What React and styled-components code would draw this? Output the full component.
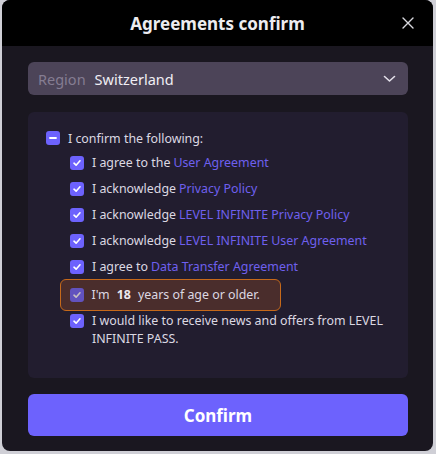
import React from "react";
import styled, { createGlobalStyle } from "styled-components";

const GlobalStyle = createGlobalStyle`
  html, body {
    margin: 0;
    padding: 0;
    background: #cfcfd6;
  }
  body {
    font-family: "Noto Sans", "Open Sans", Arial, sans-serif;
  }
`;

const colors = {
  body: "#1a1720",
  panel: "#221d2f",
  select: "#4c4458",
  text: "#dcd8e2",
  muted: "#857d92",
  link: "#6f60ee",
  accent: "#6d62fd",
  warn: "#c6691a",
  warnBg: "#4a2d2c",
};

const Dialog = styled.div`
  width: 431px;
  height: 451px;
  margin-left: 2px;
  border-radius: 8px;
  overflow: hidden;
  background: ${colors.body};
  display: flex;
  flex-direction: column;
`;

const Header = styled.div`
  height: 46px;
  background: #000;
  display: grid;
  grid-template-columns: 40px 1fr 40px;
  align-items: center;
  padding: 0 12px 0 12px;
`;

const Title = styled.h1`
  grid-column: 2;
  margin: 0;
  text-align: center;
  color: #ececf0;
  font-size: 17px;
  font-weight: 700;
`;

const CloseButton = styled.button`
  grid-column: 3;
  justify-self: end;
  width: 20px;
  height: 20px;
  padding: 0;
  margin-right: 3px;
  border: none;
  background: none;
  display: flex;
  align-items: center;
  justify-content: center;
  cursor: pointer;
`;

const Body = styled.div`
  flex: 1;
  padding: 16px 25px 15px 26px;
  display: flex;
  flex-direction: column;
`;

const Select = styled.div`
  height: 33px;
  border-radius: 6px;
  background: ${colors.select};
  display: flex;
  align-items: center;
  padding: 0 12px 0 10px;
  font-size: 14.5px;
`;

const SelectLabel = styled.span`
  color: ${colors.muted};
  margin-right: 9px;
`;

const SelectValue = styled.span`
  color: #f0eef4;
  flex: 1;
`;

const Panel = styled.div`
  margin-top: 17px;
  height: 266px;
  box-sizing: border-box;
  border-radius: 6px;
  background: ${colors.panel};
  padding: 13px 18px 0 18px;
  font-size: 12.4px;
  color: ${colors.text};
`;

const Row = styled.label`
  display: flex;
  align-items: center;
  gap: 8px;
  height: 26px;
  white-space: nowrap;
`;

const ChildList = styled.div`
  display: flex;
  flex-direction: column;
  align-items: flex-start;
  padding-left: 14px;
  margin-top: -1px;
`;

const ChildRow = styled.label`
  display: flex;
  align-items: ${(p) => (p.$multi ? "flex-start" : "center")};
  gap: 8px;
  box-sizing: border-box;
  min-height: ${(p) => (p.$warn ? "32px" : "26px")};
  margin: ${(p) => (p.$warn ? "-1px 0 -3px" : "0")};
  padding: ${(p) => (p.$warn ? "0 20px 0 8.5px" : p.$multi ? "4px 10px 0 10px" : "0 10px")};
  border: ${(p) => (p.$warn ? `1.5px solid ${colors.warn}` : "none")};
  border-radius: 6px;
  background: ${(p) => (p.$warn ? colors.warnBg : "transparent")};
  line-height: 18px;
  white-space: nowrap;
`;

const Box = styled.span`
  flex: none;
  width: 14px;
  height: 14px;
  border-radius: 3px;
  background: ${colors.accent};
  opacity: ${(p) => (p.$dim ? 0.7 : 1)};
  display: flex;
  align-items: center;
  justify-content: center;
  margin-top: ${(p) => (p.$multi ? "2px" : "0")};
`;

const Link = styled.a`
  color: ${colors.link};
  text-decoration: none;
  margin-left: 3px;
`;

const Age = styled.b`
  font-weight: 700;
  color: #ece8ee;
  margin: 0 7px;
`;

const ConfirmButton = styled.button`
  margin-top: 16px;
  height: 42px;
  border: none;
  border-radius: 6px;
  background: ${colors.accent};
  color: #fff;
  font-family: inherit;
  font-size: 17px;
  font-weight: 700;
  cursor: pointer;
`;

const Check = () => (
  <svg width="10" height="10" viewBox="0 0 10 10" fill="none">
    <path d="M2 5.2L4.1 7.2L8 2.8" stroke="#fff" strokeWidth="1.6" strokeLinecap="round" strokeLinejoin="round" />
  </svg>
);

const Dash = () => (
  <svg width="10" height="10" viewBox="0 0 10 10">
    <path d="M2 5H8" stroke="#fff" strokeWidth="1.8" strokeLinecap="round" />
  </svg>
);

const items = [
  { text: "I agree to the", link: "User Agreement" },
  { text: "I acknowledge", link: "Privacy Policy" },
  { text: "I acknowledge", link: "LEVEL INFINITE Privacy Policy" },
  { text: "I acknowledge", link: "LEVEL INFINITE User Agreement" },
  { text: "I agree to", link: "Data Transfer Agreement" },
];

export default function App() {
  return (
    <>
      <GlobalStyle />
      <Dialog>
        <Header>
          <Title>Agreements confirm</Title>
          <CloseButton aria-label="close">
            <svg width="12" height="12" viewBox="0 0 12 12">
              <path d="M1 1L11 11M11 1L1 11" stroke="#d8d8de" strokeWidth="1.4" strokeLinecap="round" />
            </svg>
          </CloseButton>
        </Header>
        <Body>
          <Select>
            <SelectLabel>Region</SelectLabel>
            <SelectValue>Switzerland</SelectValue>
            <svg width="13" height="8" viewBox="0 0 13 8" fill="none">
              <path d="M1.5 1.5L6.5 6L11.5 1.5" stroke="#e4e0ea" strokeWidth="1.6" strokeLinecap="round" strokeLinejoin="round" />
            </svg>
          </Select>
          <Panel>
            <Row>
              <Box><Dash /></Box>
              I confirm the following:
            </Row>
            <ChildList>
              {items.map((it) => (
                <ChildRow key={it.link}>
                  <Box><Check /></Box>
                  <span>
                    {it.text}
                    <Link href="#">{it.link}</Link>
                  </span>
                </ChildRow>
              ))}
              <ChildRow $warn>
                <Box $dim><Check /></Box>
                <span>
                  I'm<Age>18</Age>years of age or older.
                </span>
              </ChildRow>
              <ChildRow $multi>
                <Box $multi><Check /></Box>
                <span>
                  I would like to receive news and offers from LEVEL
                  <br />
                  INFINITE PASS.
                </span>
              </ChildRow>
            </ChildList>
          </Panel>
          <ConfirmButton>Confirm</ConfirmButton>
        </Body>
      </Dialog>
    </>
  );
}
